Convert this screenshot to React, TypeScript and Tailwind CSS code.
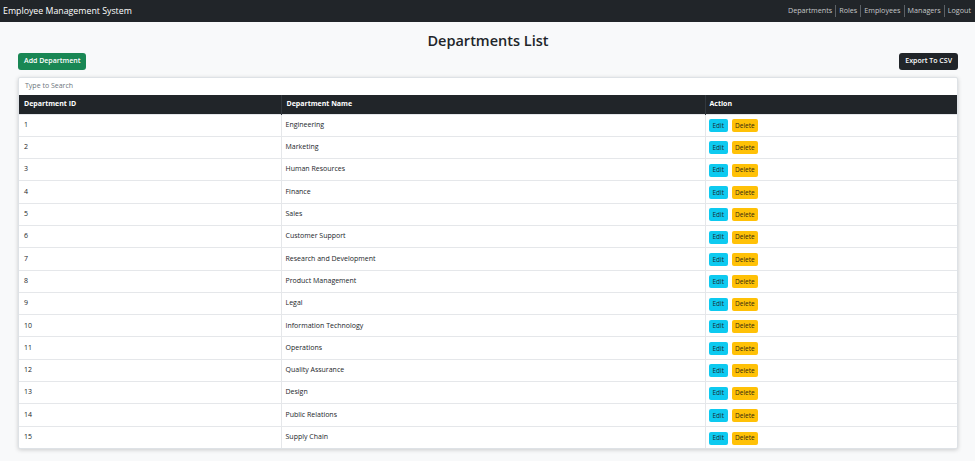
import React from "react";

const departments = [
  "Engineering",
  "Marketing",
  "Human Resources",
  "Finance",
  "Sales",
  "Customer Support",
  "Research and Development",
  "Product Management",
  "Legal",
  "Information Technology",
  "Operations",
  "Quality Assurance",
  "Design",
  "Public Relations",
  "Supply Chain",
];

const links = ["Departments", "Roles", "Employees", "Managers", "Logout"];

export default function App() {
  return (
    <div
      className="min-h-[461px] w-[975px] bg-[#f8f9fa] text-[#212529]"
      style={{ fontFamily: '"Open Sans", "Noto Sans", sans-serif' }}
    >
      <nav className="flex h-[22px] items-center justify-between bg-[#212529] pl-[3px] pr-[4px]">
        <span className="text-[8.8px] leading-none text-white">
          Employee Management System
        </span>
        <div className="flex items-center text-[7.2px] leading-none text-[#c4c6c8]">
          {links.map((l, i) => (
            <span key={l} className="flex items-center">
              {i > 0 && <span className="mx-[3px] h-[12px] w-px bg-[#5c6166]" />}
              <span>{l}</span>
            </span>
          ))}
        </div>
      </nav>

      <div className="px-[18px] pr-[17px]">
        <h1 className="mt-[8px] text-center text-[14.5px] font-semibold leading-[22px] text-[#212529]">
          Departments List
        </h1>
        <div className="mt-[1px] flex items-center justify-between">
          <button className="flex h-[17px] items-center rounded-[3px] bg-[#198754] px-[6px] text-[7px] font-semibold text-white">
            Add Department
          </button>
          <button className="flex h-[17px] items-center rounded-[3px] bg-[#212529] px-[6px] text-[7px] font-semibold text-white">
            Export To CSV
          </button>
        </div>

        <div className="mt-[7px] overflow-hidden rounded-[2px] border border-[#dee2e6] bg-white shadow-[0_1px_4px_rgba(0,0,0,0.18)]">
          <div className="flex h-[17px] items-center px-[6px] text-[7px] text-[#6c757d]">
            Type to Search
          </div>
          <table className="w-full table-fixed border-collapse text-[7px]">
            <colgroup>
              <col className="w-[262px]" />
              <col className="w-[424px]" />
              <col />
            </colgroup>
            <thead>
              <tr className="h-[19px] bg-[#212529] text-left text-white">
                <th className="border-r border-[#32383e] px-[5px] font-bold">Department ID</th>
                <th className="border-r border-[#32383e] px-[5px] font-bold">Department Name</th>
                <th className="px-[4px] font-bold">Action</th>
              </tr>
            </thead>
            <tbody>
              {departments.map((d, i) => (
                <tr key={d} className="h-[22.3px] border-t border-[#e5e7ea]">
                  <td className="border-r border-[#e5e7ea] px-[5px] text-[#212529]">{i + 1}</td>
                  <td className="border-r border-[#e5e7ea] px-[4px] text-[#212529]">{d}</td>
                  <td className="px-[3px]">
                    <div className="flex items-center gap-[4px] pt-[1px]">
                      <span className="flex h-[13px] items-center rounded-[2px] bg-[#0dcaf0] px-[4px] text-[6.5px] text-[#1b2a33]">
                        Edit
                      </span>
                      <span className="flex h-[13px] items-center rounded-[2px] bg-[#ffc107] px-[3px] text-[6.5px] text-[#2f2a10]">
                        Delete
                      </span>
                    </div>
                  </td>
                </tr>
              ))}
            </tbody>
          </table>
        </div>
      </div>
    </div>
  );
}
